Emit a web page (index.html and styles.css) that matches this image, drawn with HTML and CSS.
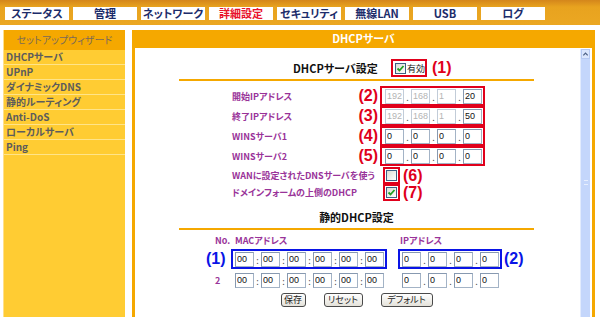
FILE: index.html
```html
<!DOCTYPE html>
<html lang="ja">
<head>
    <meta charset="UTF-8">
    <title>DHCPサーバ</title>
    <link rel="stylesheet" href="styles.css">
</head>
<body>
    <div class="topbar">
        <div class="tab">ステータス</div>
        <div class="tab">管理</div>
        <div class="tab">ネットワーク</div>
        <div class="tab active">詳細設定</div>
        <div class="tab">セキュリティ</div>
        <div class="tab">無線LAN</div>
        <div class="tab">USB</div>
        <div class="tab">ログ</div>
    </div>

    <div class="layout">
        <div class="sidebar">
            <div class="sideHead">セットアップウィザード</div>
            <ul class="sideMenu">
                <li>DHCPサーバ</li>
                <li>UPnP</li>
                <li>ダイナミックDNS</li>
                <li>静的ルーティング</li>
                <li>Anti-DoS</li>
                <li>ローカルサーバ</li>
                <li>Ping</li>
            </ul>
        </div>

        <div class="panel">
            <div class="panelHead">DHCPサーバ</div>
            <div class="panelBody">
                <div class="content">
                    <div class="form">
                        <div class="secTitle">
                            <h2>DHCPサーバ設定</h2>
                            <div class="rbox enable">
                                <span class="cb checked"></span>
                                <span class="cbText">有効</span>
                            </div>
                            <span class="mark red">(1)</span>
                        </div>
                        <div class="rule"></div>

                        <div class="rows">
                            <div class="row">
                                <span class="label">開始IPアドレス</span>
                                <span class="mark red side">(2)</span>
                                <div class="rbox ipbox">
                                    <input class="ip" value="192" disabled><span class="sep">.</span><input class="ip" value="168" disabled><span class="sep">.</span><input class="ip" value="1" disabled><span class="sep">.</span><input class="ip" value="20">
                                </div>
                            </div>
                            <div class="row">
                                <span class="label">終了IPアドレス</span>
                                <span class="mark red side">(3)</span>
                                <div class="rbox ipbox">
                                    <input class="ip" value="192" disabled><span class="sep">.</span><input class="ip" value="168" disabled><span class="sep">.</span><input class="ip" value="1" disabled><span class="sep">.</span><input class="ip" value="50">
                                </div>
                            </div>
                            <div class="row">
                                <span class="label">WINSサーバ1</span>
                                <span class="mark red side">(4)</span>
                                <div class="rbox ipbox">
                                    <input class="ip" value="0"><span class="sep">.</span><input class="ip" value="0"><span class="sep">.</span><input class="ip" value="0"><span class="sep">.</span><input class="ip" value="0">
                                </div>
                            </div>
                            <div class="row">
                                <span class="label">WINSサーバ2</span>
                                <span class="mark red side">(5)</span>
                                <div class="rbox ipbox">
                                    <input class="ip" value="0"><span class="sep">.</span><input class="ip" value="0"><span class="sep">.</span><input class="ip" value="0"><span class="sep">.</span><input class="ip" value="0">
                                </div>
                            </div>
                            <div class="row check first">
                                <span class="label wide">WANに設定されたDNSサーバを使う</span>
                                <div class="rbox cbox"><span class="cb"></span></div>
                                <span class="mark red after">(6)</span>
                            </div>
                            <div class="row check">
                                <span class="label wide">ドメインフォームの上側のDHCP</span>
                                <div class="rbox cbox"><span class="cb checked"></span></div>
                                <span class="mark red after">(7)</span>
                            </div>
                        </div>

                        <h2 class="subTitle">静的DHCP設定</h2>
                        <div class="rule small"></div>

                        <div class="static">
                            <span class="colHead num">No.</span>
                            <span class="colHead mac">MACアドレス</span>
                            <span></span>
                            <span class="colHead ipcol">IPアドレス</span>
                            <span></span>

                            <span class="mark blue first">(1)</span>
                            <div class="bbox">
                                <input class="ip" value="00"><span class="sep">:</span><input class="ip" value="00"><span class="sep">:</span><input class="ip" value="00"><span class="sep">:</span><input class="ip" value="00"><span class="sep">:</span><input class="ip" value="00"><span class="sep">:</span><input class="ip" value="00">
                            </div>
                            <span></span>
                            <div class="bbox">
                                <input class="ip" value="0"><span class="sep">.</span><input class="ip" value="0"><span class="sep">.</span><input class="ip" value="0"><span class="sep">.</span><input class="ip" value="0">
                            </div>
                            <span class="mark blue last">(2)</span>

                            <span class="rowNum">2</span>
                            <div class="plain">
                                <input class="ip" value="00"><span class="sep">:</span><input class="ip" value="00"><span class="sep">:</span><input class="ip" value="00"><span class="sep">:</span><input class="ip" value="00"><span class="sep">:</span><input class="ip" value="00"><span class="sep">:</span><input class="ip" value="00">
                            </div>
                            <span></span>
                            <div class="plain">
                                <input class="ip" value="0"><span class="sep">.</span><input class="ip" value="0"><span class="sep">.</span><input class="ip" value="0"><span class="sep">.</span><input class="ip" value="0">
                            </div>
                            <span></span>
                        </div>

                        <div class="buttons">
                            <button class="btn save">保存</button>
                            <button class="btn reset">リセット</button>
                            <button class="btn def">デフォルト</button>
                        </div>
                    </div>
                </div>

                <div class="scrollbar">
                    <div class="scrollBtn">
                        <svg width="8" height="8" viewBox="0 0 8 8"><path d="M1.5 5.5 L4 3 L6.5 5.5" fill="none" stroke="#4d6185" stroke-width="1.4"/></svg>
                    </div>
                    <div class="grip"></div>
                </div>
            </div>
        </div>
    </div>
</body>
</html>
```

FILE: styles.css
```css
* {
    margin: 0;
    padding: 0;
    box-sizing: border-box;
    list-style: none;
}

body {
    font-family: "Noto Sans CJK JP", sans-serif;
    font-feature-settings: "palt";
    background-color: white;
    overflow: hidden;
}

/* top navigation */
.topbar {
    height: 25px;
    padding: 7px 0 0 5px;
    display: flex;
    gap: 4px;
    background: linear-gradient(#d4861b 0, #e8a31f 7px, #eba722 100%);
}

.tab {
    width: 64px;
    height: 13px;
    background-color: white;
    color: #1c2c6a;
    font-size: 11px;
    font-weight: bold;
    line-height: 13px;
    text-align: center;
}

.tab.active {
    color: #e8122c;
}

.layout {
    display: flex;
    height: 287px;
    margin-top: 5px;
}

/* left menu */
.sidebar {
    width: 122px;
    margin-left: 3px;
    background-color: #ffcc33;
    border-left: 1px solid #ffe08a;
}

.sideHead {
    height: 20px;
    background-color: #f5a800;
    color: #7a6a58;
    font-size: 10px;
    line-height: 20px;
    text-align: center;
}

.sideMenu li {
    height: 15px;
    padding-left: 2px;
    border-bottom: 1px solid #ffe48a;
    color: #5c5c5c;
    font-size: 10px;
    font-weight: bold;
    line-height: 14px;
}

/* main panel */
.panel {
    width: 463px;
    margin-left: 7px;
    display: flex;
    flex-direction: column;
    border-left: 3px solid #f5a800;
    border-right: 3px solid #f5a800;
}

.panelHead {
    height: 18px;
    background-color: #f5a800;
    color: white;
    font-size: 11px;
    font-weight: bold;
    line-height: 17px;
    text-align: center;
}

.panelBody {
    flex: 1;
    display: flex;
    min-height: 0;
}

.content {
    flex: 1;
}

.form {
    width: 355px;
    margin-left: 44px;
}

.secTitle {
    height: 18px;
    margin-top: 11px;
    padding-left: 114px;
    display: flex;
    align-items: center;
}

.secTitle h2 {
    width: 98px;
    font-size: 11px;
    color: #111;
    white-space: nowrap;
}

.rule {
    height: 2px;
    margin-top: 2px;
    background-color: #f5a800;
}

.rule.small {
    margin-top: 5px;
}

.rbox {
    display: flex;
    align-items: center;
    border: 2px solid #e0001b;
}

.enable {
    width: 36px;
    height: 18px;
    padding-left: 2px;
    white-space: nowrap;
}

.cbText {
    margin-left: 1px;
    font-size: 9px;
    color: #222;
}

.mark {
    font-family: "Liberation Sans", Arial, sans-serif;
    font-size: 16px;
    font-weight: bold;
    line-height: 1;
}

.red {
    color: #e0001b;
}

.blue {
    color: #0a14e6;
}

.secTitle .mark {
    margin-left: 5px;
}

/* checkbox */
.cb {
    flex-shrink: 0;
    width: 11px;
    height: 11px;
    border: 1px solid #3d5f84;
    background: linear-gradient(135deg, #dcdcd4, #ffffff);
}

.cb.checked {
    background: url("data:image/svg+xml;utf8,<svg xmlns='http://www.w3.org/2000/svg' width='9' height='9'><path d='M1.5 4.5 L3.5 6.5 L7.5 2' fill='none' stroke='%2321a121' stroke-width='1.8'/></svg>") center no-repeat, linear-gradient(135deg, #dcdcd4, #ffffff);
}

/* form rows */
.rows {
    margin-top: 5px;
}

.row {
    height: 20px;
    display: flex;
    align-items: center;
}

.label {
    width: 126px;
    margin-left: 53px;
    color: #993399;
    font-size: 9px;
    font-weight: bold;
    white-space: nowrap;
}

.label.wide {
    width: 151px;
}

.mark.side {
    width: 22px;
    padding-right: 2px;
    text-align: right;
}

.ipbox {
    width: 105px;
    height: 20px;
    padding-left: 3px;
}

.row.check {
    height: 17px;
}

.row.check.first {
    margin-top: 1px;
}

.cbox {
    width: 17px;
    height: 17px;
    justify-content: center;
}

.mark.after {
    margin-left: 3px;
}

.ip {
    width: 19px;
    height: 15px;
    padding: 0 0 0 1px;
    border: 1px solid #a3b3c6;
    border-top-color: #8799b0;
    border-left-color: #8799b0;
    font-family: "Liberation Sans", Arial, sans-serif;
    font-size: 9px;
    color: #111;
    background-color: white;
}

.ip:disabled {
    color: #b4b4b4;
    border-color: #c2ccd8;
}

.sep {
    width: 7px;
    align-self: flex-end;
    color: #555;
    font-size: 9px;
    line-height: 12px;
    text-align: center;
}

/* static dhcp */
.subTitle {
    height: 12px;
    margin-top: 10px;
    font-size: 11px;
    line-height: 12px;
    text-align: center;
    color: #111;
}

.static {
    margin-top: 5px;
    margin-left: 25px;
    display: grid;
    grid-template-columns: 27px 156px 11px 104px 24px;
    grid-template-rows: 12px 20px 18px;
    row-gap: 2px;
    align-items: center;
}

.colHead {
    color: #993399;
    font-size: 9px;
    font-weight: bold;
    line-height: 12px;
    white-space: nowrap;
}

.colHead.num {
    padding-left: 11px;
}

.colHead.mac {
    padding-left: 4px;
}

.colHead.ipcol {
    padding-left: 2px;
}

.mark.first {
    padding-left: 2px;
}

.mark.last {
    padding-left: 2px;
}

.bbox {
    height: 20px;
    padding-left: 2px;
    display: flex;
    align-items: center;
    border: 2px solid #0a14e6;
}

.plain {
    padding-left: 4px;
    display: flex;
    align-items: center;
}

.rowNum {
    padding-left: 11px;
    color: #993399;
    font-size: 9px;
    font-weight: bold;
}

.buttons {
    margin-top: 4px;
    display: flex;
    justify-content: center;
    gap: 18px;
}

.btn {
    height: 14px;
    border: 1px solid #4a4a4a;
    border-radius: 3px;
    background: linear-gradient(#ffffff, #e4e2da);
    font-family: "Noto Sans CJK JP", sans-serif;
    font-feature-settings: "palt";
    font-size: 9px;
    line-height: 12px;
    color: #222;
}

.btn.save {
    width: 25px;
}

.btn.reset {
    width: 39px;
}

.btn.def {
    width: 52px;
}

/* scrollbar */
.scrollbar {
    width: 10px;
    margin: 1px 2px 0 0;
    background-color: #c4d6fb;
    border-left: 1px solid #e2ebfd;
}

.scrollBtn {
    height: 10px;
    display: flex;
    align-items: center;
    justify-content: center;
    background-color: #dbe6fd;
    border: 1px solid #b6c9f2;
}

.grip {
    width: 4px;
    height: 5px;
    margin: 121px auto 0;
    border-top: 1px solid #e8effe;
    border-bottom: 1px solid #e8effe;
}
```
